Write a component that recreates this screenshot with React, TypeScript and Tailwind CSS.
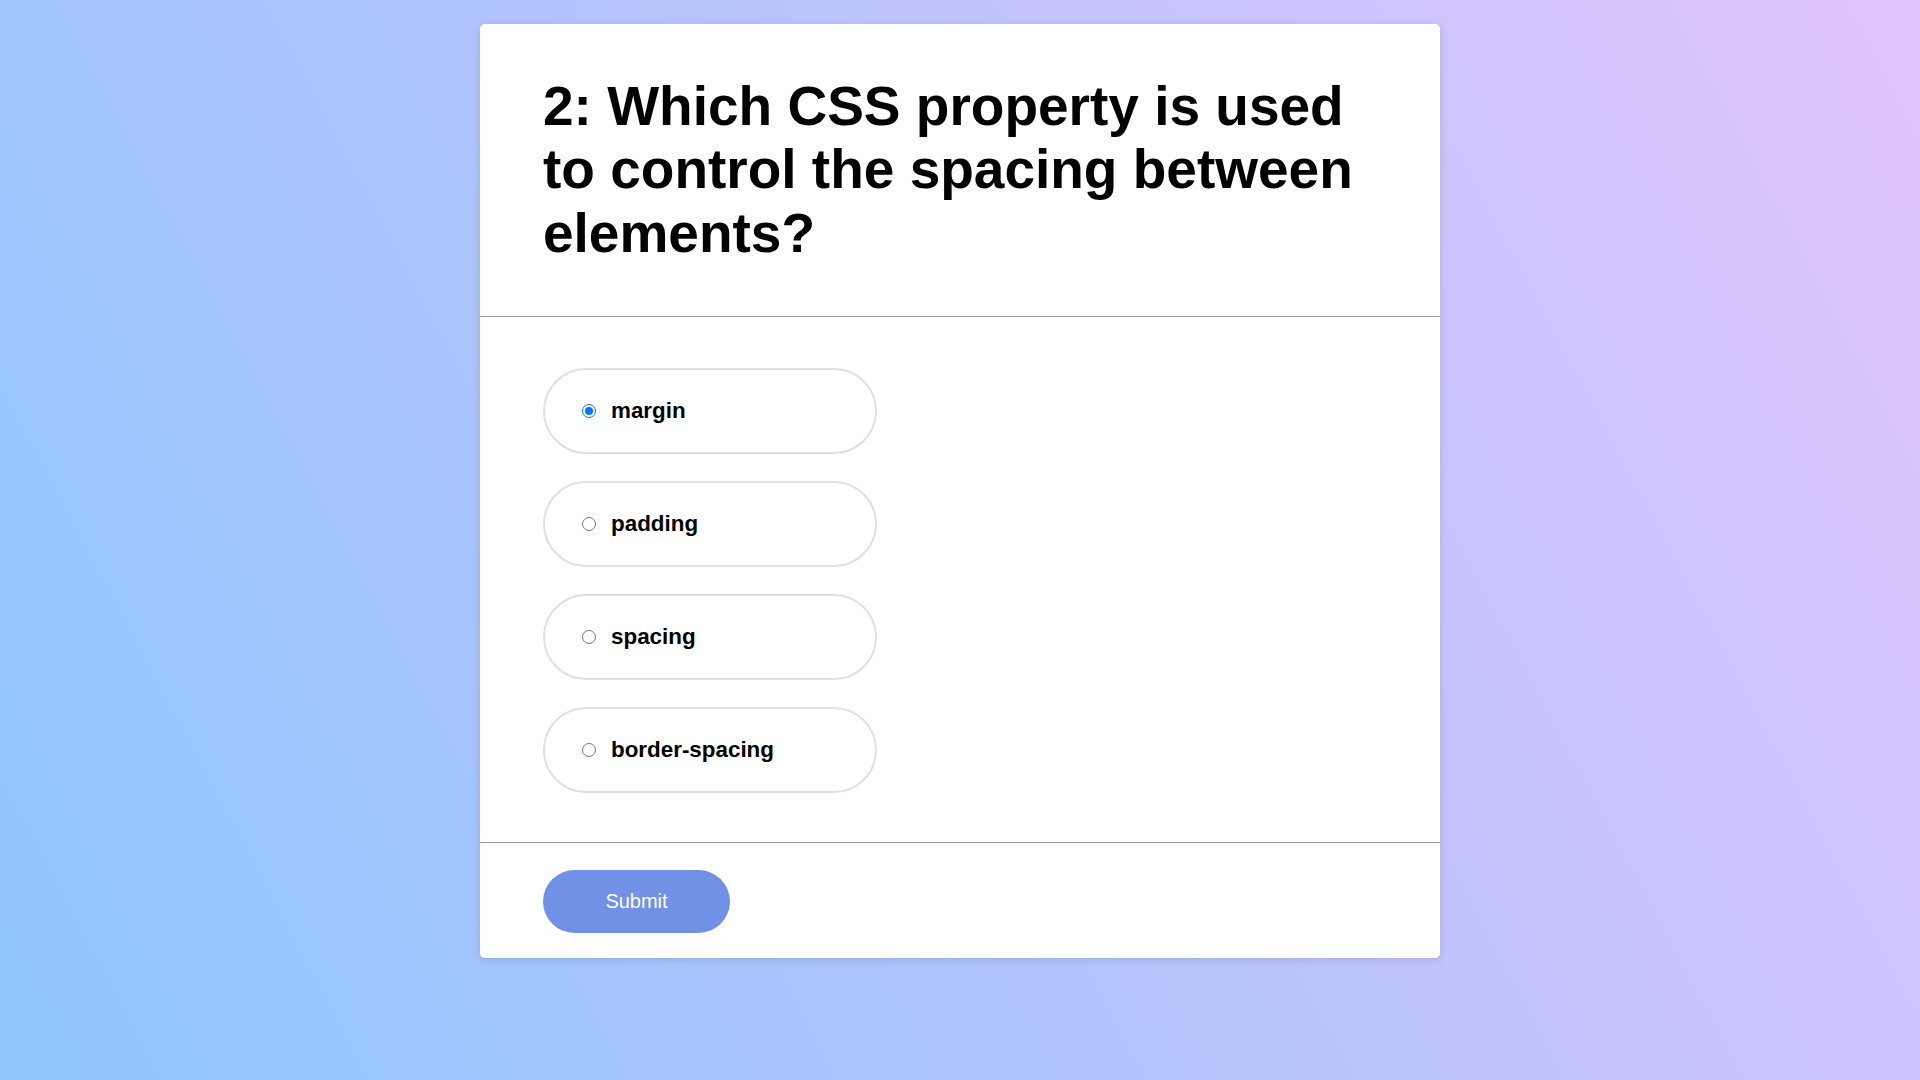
import React from "react";

const options = ["margin", "padding", "spacing", "border-spacing"];

function Radio({ checked }: { checked: boolean }) {
  return checked ? (
    <span className="flex h-[14px] w-[14px] shrink-0 items-center justify-center rounded-full border-[1.5px] border-[#0075ff] bg-white">
      <span className="h-[8px] w-[8px] rounded-full bg-[#0075ff]" />
    </span>
  ) : (
    <span className="h-[14px] w-[14px] shrink-0 rounded-full border border-[#767676] bg-white" />
  );
}

export default function App() {
  return (
    <div
      className="flex min-h-screen w-full justify-center bg-[linear-gradient(62deg,#8ec5fc_0%,#e0c3fc_100%)] pt-[24px]"
      style={{ fontFamily: '"Liberation Sans", Arial, sans-serif' }}
    >
      <div className="h-fit w-[960px] rounded-[5px] bg-white shadow-[0_2px_8px_rgba(0,0,0,0.12)]">
        <div className="border-b border-[#999] px-[63px] py-[51px]">
          <h1 className="text-[55px] font-bold leading-[1.15] text-black">
            2: Which CSS property is used to control the spacing between elements?
          </h1>
        </div>
        <div className="flex flex-col gap-[27px] border-b border-[#999] px-[63px] pt-[51px] pb-[49px]">
          {options.map((o, i) => (
            <label
              key={o}
              className="flex h-[86px] w-[334px] items-center gap-[15px] rounded-full border-2 border-[#e0e0e0] pl-[37px]"
            >
              <Radio checked={i === 0} />
              <span className="text-[22.4px] font-bold text-black">{o}</span>
            </label>
          ))}
        </div>
        <div className="px-[63px] pt-[27px] pb-[25px]">
          <button className="flex h-[63px] w-[187px] items-center justify-center rounded-full bg-[#7091e6] text-[20px] text-white">
            Submit
          </button>
        </div>
      </div>
    </div>
  );
}
